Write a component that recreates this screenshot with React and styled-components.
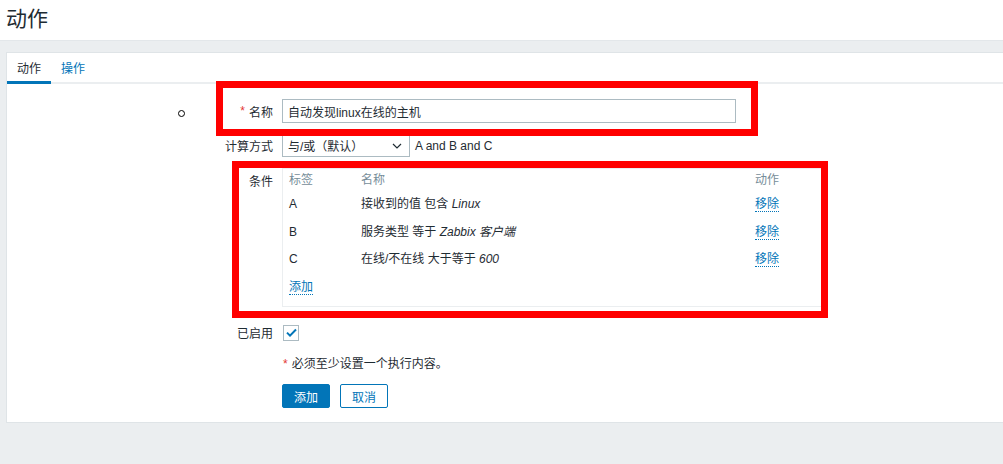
import React from 'react';
import styled, { createGlobalStyle } from 'styled-components';

const GlobalStyle = createGlobalStyle`
  html, body {
    margin: 0;
    padding: 0;
    background: #ebeef0;
  }
  body {
    font-family: "Liberation Sans", Arial, "Noto Sans CJK SC", sans-serif;
    font-size: 12px;
    color: #1f2c33;
  }
`;

const conditions = [
  { label: 'A', name: '接收到的值 包含 ', value: 'Linux' },
  { label: 'B', name: '服务类型 等于 ', value: 'Zabbix 客户端' },
  { label: 'C', name: '在线/不在线 大于等于 ', value: '600' },
];

const App = () => {
  return (
    <Page>
      <GlobalStyle />
      <Header>
        <Title>动作</Title>
      </Header>
      <Main>
        <Card>
          <TabBar>
            <Tab $active>动作</Tab>
            <Tab>操作</Tab>
          </TabBar>
          <Form>
            <Label $center>
              <Asterisk>*</Asterisk> 名称
            </Label>
            <Field>
              <TextInput>自动发现linux在线的主机</TextInput>
            </Field>

            <Label $center $gap={11}>计算方式</Label>
            <Field $gap={11}>
              <SelectBox>
                <span>与/或（默认）</span>
                <svg width="10" height="6" viewBox="0 0 10 6">
                  <path d="M1 1l4 4 4-4" fill="none" stroke="#1f2c33" strokeWidth="1.2" />
                </svg>
              </SelectBox>
              <Formula>A and B and C</Formula>
            </Field>

            <Label $gap={11} $top={4}>条件</Label>
            <Field $gap={11}>
              <ConditionBox>
                <CondHeader>
                  <span>标签</span>
                  <span>名称</span>
                  <span>动作</span>
                </CondHeader>
                {conditions.map((c) => (
                  <CondRow key={c.label}>
                    <span>{c.label}</span>
                    <span>
                      {c.name}
                      <em>{c.value}</em>
                    </span>
                    <span>
                      <Link>移除</Link>
                    </span>
                  </CondRow>
                ))}
                <CondRow>
                  <span>
                    <Link>添加</Link>
                  </span>
                </CondRow>
              </ConditionBox>
            </Field>

            <Label $center $gap={17}>已启用</Label>
            <Field $gap={17}>
              <Checkbox>
                <svg width="11" height="9" viewBox="0 0 11 9">
                  <path d="M1 4.6l3 3L10 1.5" fill="none" stroke="#0275b8" strokeWidth="2" />
                </svg>
              </Checkbox>
            </Field>

            <Label $gap={16} />
            <Field $gap={16}>
              <Note>
                <Asterisk>*</Asterisk>必须至少设置一个执行内容。
              </Note>
            </Field>

            <Label $gap={13} />
            <Field $gap={13}>
              <Buttons>
                <Button $primary>添加</Button>
                <Button>取消</Button>
              </Buttons>
            </Field>
          </Form>
        </Card>
      </Main>

      <Cursor />
      <Highlight style={{ left: 216, top: 81, width: 542, height: 55 }} />
      <Highlight style={{ left: 232, top: 161, width: 596, height: 157 }} />
    </Page>
  );
};

export default App;

const Page = styled.div`
  position: relative;
  width: 1003px;
  height: 464px;
  overflow: hidden;
  background: #ebeef0;
`;

const Header = styled.header`
  height: 40px;
  background: #fff;
  border-bottom: 1px solid #e3e7ea;
  display: flex;
  align-items: center;
  padding-left: 6px;
`;

const Title = styled.h1`
  margin: 0;
  font-size: 21px;
  font-weight: 400;
  color: #1f2c33;
  line-height: 1;
  margin-top: -3px;
`;

const Main = styled.main`
  padding: 11px 0 0 6px;
`;

const Card = styled.section`
  background: #fff;
  border: 1px solid #dfe4e7;
  border-right: none;
  height: 369px;
`;

const TabBar = styled.nav`
  display: flex;
  height: 29px;
  border-bottom: 2px solid #ebeef0;
`;

const Tab = styled.a`
  display: flex;
  align-items: center;
  padding: 0 10px;
  height: 28px;
  margin-bottom: -2px;
  border-bottom: 3px solid ${(p) => (p.$active ? '#0275b8' : 'transparent')};
  color: ${(p) => (p.$active ? '#1f2c33' : '#0275b8')};
  cursor: pointer;
`;

const Form = styled.div`
  display: grid;
  grid-template-columns: 266px 1fr;
  column-gap: 9px;
  padding-top: 15px;
`;

const Label = styled.div`
  margin-top: ${(p) => p.$gap || 0}px;
  padding-top: ${(p) => p.$top || 0}px;
  display: flex;
  justify-content: flex-end;
  align-items: ${(p) => (p.$center ? 'center' : 'flex-start')};
  white-space: nowrap;
`;

const Field = styled.div`
  margin-top: ${(p) => p.$gap || 0}px;
  display: flex;
  align-items: center;
`;

const Asterisk = styled.span`
  color: #e33734;
  margin-right: 4px;
`;

const TextInput = styled.div`
  box-sizing: border-box;
  width: 454px;
  height: 24px;
  border: 1px solid #acbbc2;
  background: #fff;
  padding: 0 5px;
  display: flex;
  align-items: center;
  font-size: 12px;
`;

const SelectBox = styled.div`
  box-sizing: border-box;
  width: 128px;
  height: 23px;
  border: 1px solid #acbbc2;
  background: #fff;
  padding: 0 7px 0 5px;
  display: flex;
  align-items: center;
  justify-content: space-between;
`;

const Formula = styled.span`
  margin-left: 5px;
`;

const ConditionBox = styled.div`
  box-sizing: border-box;
  width: 542px;
  height: 139px;
  border: 1px solid #ebeef0;
  padding: 0 0 0 6px;
`;

const CondHeader = styled.div`
  display: grid;
  grid-template-columns: 72px 394px 1fr;
  height: 22px;
  padding-top: 2px;
  box-sizing: border-box;
  line-height: 18px;
  color: #768d99;
`;

const CondRow = styled.div`
  display: grid;
  grid-template-columns: 72px 394px 1fr;
  height: 27.5px;
  line-height: 27.5px;

  em {
    font-style: italic;
  }
`;

const Link = styled.a`
  color: #0275b8;
  border-bottom: 1px dotted #0275b8;
  cursor: pointer;
`;

const Checkbox = styled.div`
  box-sizing: border-box;
  width: 16px;
  height: 16px;
  border: 1px solid #acbbc2;
  background: #fff;
  display: flex;
  align-items: center;
  justify-content: center;
  margin-left: 1px;
`;

const Note = styled.div`
  line-height: 14px;
  margin-left: 1px;
`;

const Buttons = styled.div`
  display: flex;
  gap: 10px;
`;

const Button = styled.button`
  box-sizing: border-box;
  width: 48px;
  height: 24px;
  border-radius: 2px;
  border: 1px solid #0275b8;
  background: ${(p) => (p.$primary ? '#0275b8' : '#fff')};
  color: ${(p) => (p.$primary ? '#fff' : '#0275b8')};
  font-family: inherit;
  font-size: 12px;
  padding: 0;
  cursor: pointer;
`;

const Cursor = styled.div`
  position: absolute;
  left: 178px;
  top: 110px;
  width: 5px;
  height: 5px;
  border: 1px solid #000;
  border-radius: 50%;
`;

const Highlight = styled.div`
  position: absolute;
  box-sizing: border-box;
  border: 7px solid #ff0000;
  pointer-events: none;
`;
